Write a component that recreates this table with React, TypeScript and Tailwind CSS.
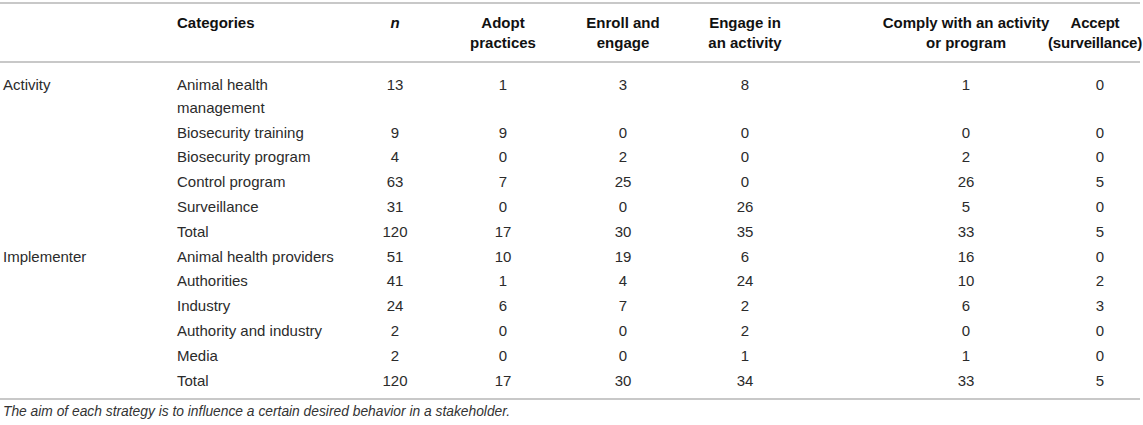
import React from "react";

const cols = "grid grid-cols-[174px_186px_70px_146px_94px_150px_242px_76px]";

const rows: { group?: string; name: React.ReactNode; vals: number[] }[] = [
  { group: "Activity", name: <>Animal health<br />management</>, vals: [13, 1, 3, 8, 1, 0] },
  { name: "Biosecurity training", vals: [9, 9, 0, 0, 0, 0] },
  { name: "Biosecurity program", vals: [4, 0, 2, 0, 2, 0] },
  { name: "Control program", vals: [63, 7, 25, 0, 26, 5] },
  { name: "Surveillance", vals: [31, 0, 0, 26, 5, 0] },
  { name: "Total", vals: [120, 17, 30, 35, 33, 5] },
  { group: "Implementer", name: "Animal health providers", vals: [51, 10, 19, 6, 16, 0] },
  { name: "Authorities", vals: [41, 1, 4, 24, 10, 2] },
  { name: "Industry", vals: [24, 6, 7, 2, 6, 3] },
  { name: "Authority and industry", vals: [2, 0, 0, 2, 0, 0] },
  { name: "Media", vals: [2, 0, 0, 1, 1, 0] },
  { name: "Total", vals: [120, 17, 30, 34, 33, 5] },
];

function Num({ v, i, head }: { v: React.ReactNode; i: number; head?: boolean }) {
  // comply column is shifted so its centre sits where the reference has it
  let cls = "flex justify-center";
  if (i === 4) cls += " pl-[50px]";
  if (i === 5 && head) cls += " pr-[10px] tracking-[-0.2px]";
  return (
    <div className={cls}>
      <span className="whitespace-nowrap">{v}</span>
    </div>
  );
}

export default function App() {
  const heads = [
    <i key="n">n</i>,
    <>Adopt<br />practices</>,
    <>Enroll and<br />engage</>,
    <>Engage in<br />an activity</>,
    <>Comply with an activity<br />or program</>,
    <>Accept<br />(surveillance)</>,
  ];

  return (
    <div className="w-[1143px] h-[425px] bg-white pt-[2px] font-['Liberation_Sans',Arial,sans-serif] text-[15px] text-[#2b2b2b] overflow-hidden">
      <div className="w-[1140px] border-y-2 border-[#c8c8c8]">
        <div className={`${cols} pt-[9px] pb-[8px] font-bold text-[#111] leading-[20px] text-center`}>
          <div />
          <div className="pl-[3px] text-left">Categories</div>
          {heads.map((h, i) => (
            <Num key={i} v={h} i={i} head />
          ))}
        </div>
      </div>

      <div className="w-[1140px] pt-[10px] pb-[5px] border-b-2 border-[#c8c8c8] leading-[22.8px]">
        {rows.map((r, k) => (
          <div key={k} className={`${cols} py-[1px]`}>
            <div className="pl-[3px]">{r.group ?? ""}</div>
            <div className="pl-[3px]">{r.name}</div>
            {r.vals.map((v, i) => (
              <Num key={i} v={v} i={i} />
            ))}
          </div>
        ))}
      </div>

      <p className="pl-[3px] pt-[3px] italic text-[13.8px] leading-[18px] text-[#333]">
        The aim of each strategy is to influence a certain desired behavior in a stakeholder.
      </p>
    </div>
  );
}
